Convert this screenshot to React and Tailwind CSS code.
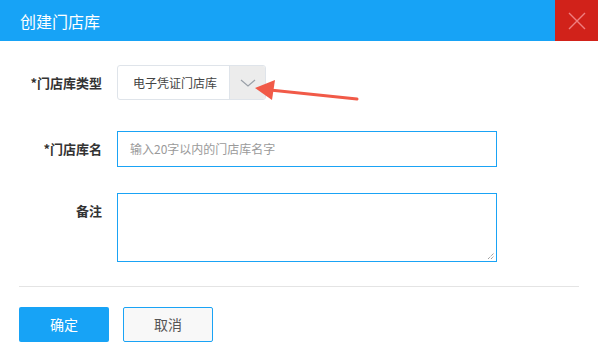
export default function App() {
  const font = { fontFamily: '"Noto Sans CJK SC", "Noto Sans", sans-serif' };
  return (
    <div className="relative w-[598px] h-[364px] bg-white overflow-hidden" style={font}>
      <div className="flex h-[41px] bg-[#17a3f6]">
        <div className="flex-1 flex items-center pl-[20px] text-white text-[16px]">创建门店库</div>
        <div className="w-[43px] h-[41px] bg-[#d1221a] flex items-center justify-center">
          <svg width="18" height="18" viewBox="0 0 18 18">
            <path d="M1 1 L17 17 M17 1 L1 17" stroke="#ef7f80" strokeWidth="1.4" fill="none" />
          </svg>
        </div>
      </div>

      <div className="flex flex-col pt-[24px]">
        <div className="flex items-center h-[35px]">
          <div className="w-[102px] text-right text-[13px] font-bold text-[#333]">*门店库类型</div>
          <div className="ml-[15px] flex h-[35px] w-[149px] border border-[#dfe4ea] rounded-[3px] overflow-hidden">
            <div className="w-[111px] flex items-center pl-[15px] text-[12px] text-[#444]">电子凭证门店库</div>
            <div className="flex-1 bg-[#ececec] border-l border-[#dfe4ea] flex items-center justify-center">
              <svg width="16" height="10" viewBox="0 0 16 10">
                <path d="M1 2 L8 8 L15 2" stroke="#9aa0a8" strokeWidth="1.2" fill="none" />
              </svg>
            </div>
          </div>
        </div>

        <div className="flex items-center h-[36px] mt-[31px]">
          <div className="w-[102px] text-right text-[13px] font-bold text-[#333]">*门店库名</div>
          <div className="ml-[15px] flex items-center h-[36px] w-[380px] border border-[#1aa3f5] pl-[12px] text-[12px] text-[#9a9a9a]">
            输入20字以内的门店库名字
          </div>
        </div>

        <div className="flex h-[69px] mt-[26px]">
          <div className="w-[102px] text-right text-[13px] font-bold text-[#333] pt-[8px]">备注</div>
          <div className="relative ml-[15px] h-[69px] w-[380px] border border-[#1aa3f5]">
            <svg className="absolute right-[1px] bottom-[1px]" width="8" height="8" viewBox="0 0 8 8">
              <path d="M1 7 L7 1 M4 7 L7 4" stroke="#777" strokeWidth="1" strokeDasharray="1 1" fill="none" />
            </svg>
          </div>
        </div>

        <div className="mt-[24px] ml-[19px] mr-[19px] h-px bg-[#e4e4e4]" />

        <div className="flex mt-[20px] ml-[19px] gap-[14px]">
          <div className="w-[90px] h-[35px] rounded-[2px] bg-[#17a3f6] text-white text-[14px] flex items-center justify-center">确定</div>
          <div className="w-[90px] h-[35px] rounded-[2px] border border-[#1aa3f5] bg-[#f8f8f8] text-[#555] text-[14px] flex items-center justify-center">取消</div>
        </div>
      </div>

      <svg className="absolute left-0 top-0" width="598" height="364" viewBox="0 0 598 364">
        <path d="M357 99 L270 90" stroke="#f15a48" strokeWidth="3" strokeLinecap="round" fill="none" />
        <path d="M255 88 L275 80 L272 100 Z" fill="#f15a48" />
      </svg>
    </div>
  );
}
